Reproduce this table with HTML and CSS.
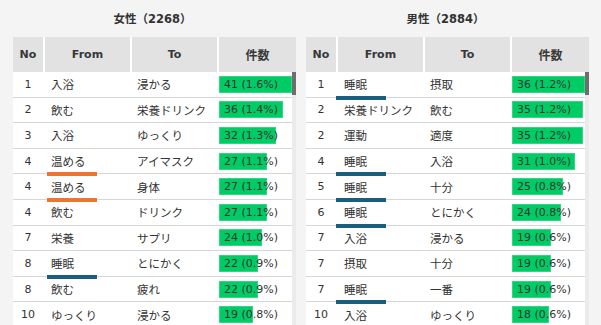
FILE: index.html
```html
<!DOCTYPE html>
<html lang="ja">
<head>
<meta charset="utf-8">
<title>共起ランキング</title>
<link rel="stylesheet" href="styles.css">
</head>
<body>
<div class="page">
  <section class="panel panel--f">
    <h2 class="title">女性（2268）</h2>
    <div class="table">
      <div class="thead">
        <div class="th th--latin">No</div><div class="th th--latin">From</div><div class="th th--latin">To</div><div class="th">件数</div>
      </div>
      <div class="body">
        <div class="rows">
          <div class="row"><div class="no">1</div><div class="from">入浴</div><div class="to">浸かる</div><div class="cnt"><span class="bar" style="width:100%"></span><span class="val">41 (1.6%)</span></div></div>
          <div class="row"><div class="no">2</div><div class="from">飲む</div><div class="to">栄養ドリンク</div><div class="cnt"><span class="bar" style="width:87.8%"></span><span class="val">36 (1.4%)</span></div></div>
          <div class="row"><div class="no">3</div><div class="from">入浴</div><div class="to">ゆっくり</div><div class="cnt"><span class="bar" style="width:78%"></span><span class="val">32 (1.3%)</span></div></div>
          <div class="row"><div class="no">4</div><div class="from from--orange">温める</div><div class="to">アイマスク</div><div class="cnt"><span class="bar" style="width:65.9%"></span><span class="val">27 (1.1%)</span></div></div>
          <div class="row"><div class="no">4</div><div class="from from--orange">温める</div><div class="to">身体</div><div class="cnt"><span class="bar" style="width:65.9%"></span><span class="val">27 (1.1%)</span></div></div>
          <div class="row"><div class="no">4</div><div class="from">飲む</div><div class="to">ドリンク</div><div class="cnt"><span class="bar" style="width:65.9%"></span><span class="val">27 (1.1%)</span></div></div>
          <div class="row"><div class="no">7</div><div class="from">栄養</div><div class="to">サプリ</div><div class="cnt"><span class="bar" style="width:58.5%"></span><span class="val">24 (1.0%)</span></div></div>
          <div class="row"><div class="no">8</div><div class="from from--blue">睡眠</div><div class="to">とにかく</div><div class="cnt"><span class="bar" style="width:53.7%"></span><span class="val">22 (0.9%)</span></div></div>
          <div class="row"><div class="no">8</div><div class="from">飲む</div><div class="to">疲れ</div><div class="cnt"><span class="bar" style="width:53.7%"></span><span class="val">22 (0.9%)</span></div></div>
          <div class="row"><div class="no">10</div><div class="from">ゆっくり</div><div class="to">浸かる</div><div class="cnt"><span class="bar" style="width:46.3%"></span><span class="val">19 (0.8%)</span></div></div>
        </div>
        <div class="track"><div class="thumb"></div></div>
      </div>
    </div>
  </section>
  <section class="panel panel--m">
    <h2 class="title">男性（2884）</h2>
    <div class="table">
      <div class="thead">
        <div class="th th--latin">No</div><div class="th th--latin">From</div><div class="th th--latin">To</div><div class="th">件数</div>
      </div>
      <div class="body">
        <div class="rows">
          <div class="row"><div class="no">1</div><div class="from from--blue">睡眠</div><div class="to">摂取</div><div class="cnt"><span class="bar" style="width:100%"></span><span class="val">36 (1.2%)</span></div></div>
          <div class="row"><div class="no">2</div><div class="from">栄養ドリンク</div><div class="to">飲む</div><div class="cnt"><span class="bar" style="width:97.2%"></span><span class="val">35 (1.2%)</span></div></div>
          <div class="row"><div class="no">2</div><div class="from">運動</div><div class="to">適度</div><div class="cnt"><span class="bar" style="width:97.2%"></span><span class="val">35 (1.2%)</span></div></div>
          <div class="row"><div class="no">4</div><div class="from from--blue">睡眠</div><div class="to">入浴</div><div class="cnt"><span class="bar" style="width:86.1%"></span><span class="val">31 (1.0%)</span></div></div>
          <div class="row"><div class="no">5</div><div class="from from--blue">睡眠</div><div class="to">十分</div><div class="cnt"><span class="bar" style="width:69.4%"></span><span class="val">25 (0.8%)</span></div></div>
          <div class="row"><div class="no">6</div><div class="from from--blue">睡眠</div><div class="to">とにかく</div><div class="cnt"><span class="bar" style="width:66.7%"></span><span class="val">24 (0.8%)</span></div></div>
          <div class="row"><div class="no">7</div><div class="from">入浴</div><div class="to">浸かる</div><div class="cnt"><span class="bar" style="width:52.8%"></span><span class="val">19 (0.6%)</span></div></div>
          <div class="row"><div class="no">7</div><div class="from">摂取</div><div class="to">十分</div><div class="cnt"><span class="bar" style="width:52.8%"></span><span class="val">19 (0.6%)</span></div></div>
          <div class="row"><div class="no">7</div><div class="from from--blue">睡眠</div><div class="to">一番</div><div class="cnt"><span class="bar" style="width:52.8%"></span><span class="val">19 (0.6%)</span></div></div>
          <div class="row"><div class="no">10</div><div class="from">入浴</div><div class="to">ゆっくり</div><div class="cnt"><span class="bar" style="width:50%"></span><span class="val">18 (0.6%)</span></div></div>
        </div>
        <div class="track"><div class="thumb"></div></div>
      </div>
    </div>
  </section>
</div>
</body>
</html>
```

FILE: styles.css
```css
* { box-sizing: border-box; }
html, body {
  margin: 0;
  padding: 0;
  background: #f4f4f4;
}
body {
  font-family: "Noto Sans CJK JP", "Noto Sans", sans-serif;
  color: #333;
  font-size: 11.5px;
  width: 601px;
  height: 325px;
  overflow: hidden;
}
.page {
  display: flex;
  gap: 10px;
  padding-left: 13px;
}
.panel {
  width: 283px;
  display: flex;
  flex-direction: column;
}
.title {
  margin: 0;
  height: 37px;
  display: flex;
  align-items: center;
  justify-content: center;
  padding-right: 4px;
  padding-bottom: 1px;
  font-family: "DejaVu Sans", "Noto Sans CJK JP", sans-serif;
  font-size: 11.5px;
  font-weight: bold;
  color: #333;
}
.thead {
  display: grid;
  grid-template-columns: 30px 85px 85px 1fr;
  column-gap: 2px;
  background: #fff;
  height: 35px;
}
.th {
  background: #e2e2e2;
  display: flex;
  align-items: center;
  justify-content: center;
  font-weight: bold;
  font-size: 12px;
  color: #383838;
}
.th--latin {
  font-family: "DejaVu Sans", sans-serif;
  font-size: 11px;
}
.body {
  display: flex;
}
.rows {
  flex: 1;
  background: #fff;
}
.track {
  width: 4px;
  background: #ebebeb;
}
.thumb {
  height: 23px;
  background: #6e6e6e;
}
.row {
  display: grid;
  grid-template-columns: 30px 85px 85px 1fr;
  column-gap: 2px;
  height: 25.6px;
  border-bottom: 1px solid #d6d6d6;
  align-items: center;
}
.no {
  text-align: center;
  font-family: "DejaVu Sans", sans-serif;
  font-size: 11px;
}
.from {
  padding-left: 6px;
  position: relative;
  height: 100%;
  display: flex;
  align-items: center;
}
.to {
  padding-left: 5px;
}
.from--orange::after,
.from--blue::after {
  content: "";
  position: absolute;
  left: 2px;
  bottom: -3px;
  width: 50px;
  height: 4px;
  z-index: 1;
}
.panel--m .from--orange::after,
.panel--m .from--blue::after {
  left: -2px;
}
.from--orange::after { background: #ec7533; }
.from--blue::after { background: #1b5d7f; }
.cnt {
  display: grid;
  height: 100%;
  align-items: center;
}
.bar {
  grid-area: 1 / 1;
  height: 17px;
  background: #00cc66;
  border: 1px solid #30d884;
  justify-self: start;
}
.val {
  grid-area: 1 / 1;
  justify-self: end;
  padding-right: 14px;
  color: #333;
  font-family: "DejaVu Sans", sans-serif;
  font-size: 11px;
}
```
